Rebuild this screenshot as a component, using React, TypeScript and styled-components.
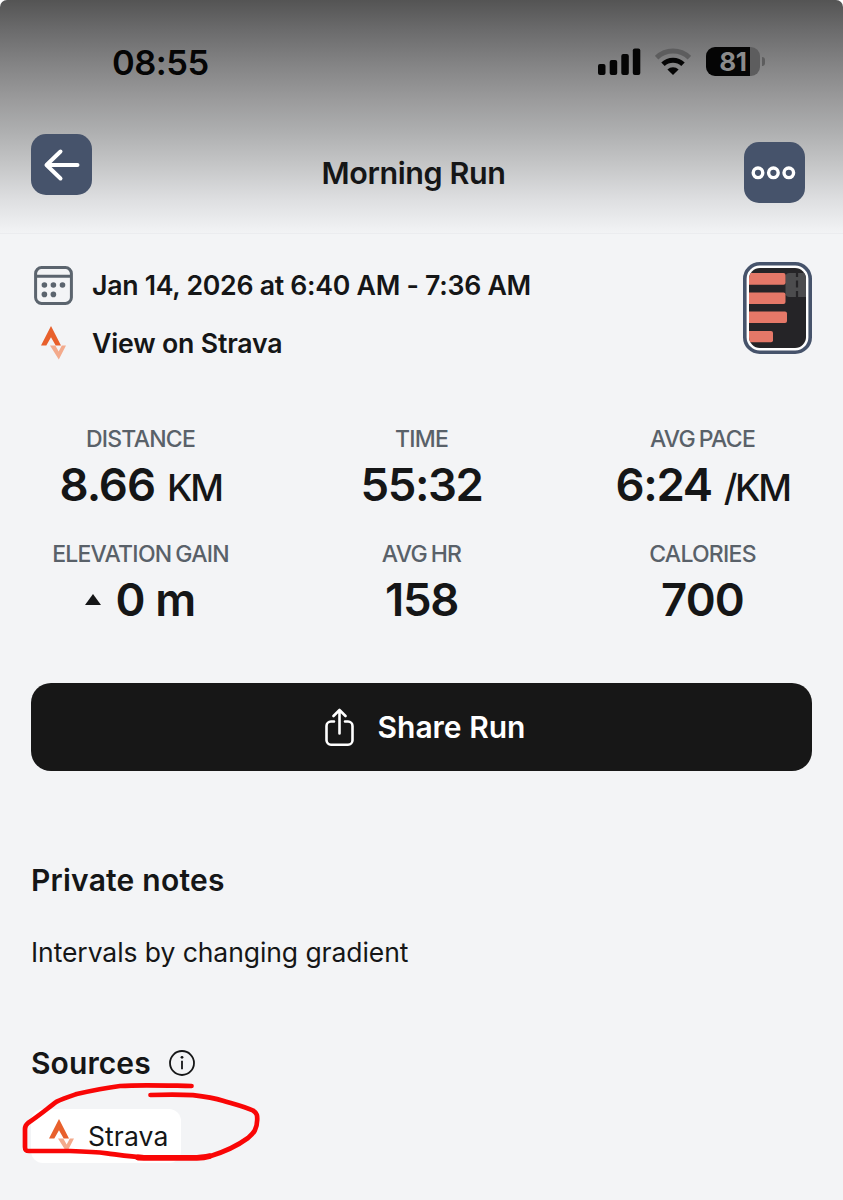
import React from "react";
import styled, { createGlobalStyle } from "styled-components";

const GlobalStyle = createGlobalStyle`
  *, *::before, *::after { box-sizing: border-box; }
  html, body { margin: 0; background: #fff; }
  body { font-family: Inter, "Liberation Sans", sans-serif; color: #151617; }
  h1, h2, p { margin: 0; }
  svg { display: block; flex: none; }
`;

const Screen = styled.div`
  position: relative;
  width: 843px;
  height: 1200px;
  overflow: hidden;
  display: flex;
  flex-direction: column;
  background: #f3f4f6;
  border-radius: 7px 7px 0 0;
`;

const Text = styled.span<{ $size: number; $weight?: number; $spacing?: number }>`
  font-size: ${(p) => p.$size}px;
  font-weight: ${(p) => p.$weight ?? 600};
  letter-spacing: ${(p) => p.$spacing ?? 0}px;
  line-height: 40px;
  white-space: pre;
`;

const Header = styled.header`
  height: 234px;
  flex: none;
  border-bottom: 1px solid #ebecef;
  background: linear-gradient(
    #545454 0, #6b6b6c 30px, #848485 65px, #9b9b9c 100px, #adaeaf 130px,
    #c5c6c7 165px, #dedfe1 200px, #f2f3f5 233px
  );
`;

const StatusBar = styled.div`
  height: 126px;
  padding: 43px 78px 0 112px;
  display: flex;
  align-items: flex-start;
  justify-content: space-between;
  color: #050505;
`;

const StatusIcons = styled.div`
  display: flex;
  gap: 14px;
  padding-top: 4px;
`;

const Battery = styled.div`
  display: flex;
  align-items: center;
  gap: 2px;
  margin-left: 1px;
`;

const BatteryBody = styled.div`
  width: 54px;
  height: 29px;
  border-radius: 9px;
  background: linear-gradient(90deg, #050505 44px, #5d5d5e 44px);
  color: #8b8b8c;
  display: flex;
  justify-content: center;
  font-size: 26px;
  line-height: 30px;
  font-weight: 700;
  letter-spacing: -0.3px;
`;

const BatteryTip = styled.div`
  width: 3px;
  height: 9px;
  border-radius: 0 4px 4px 0;
  background: #5d5d5e;
`;

const NavBar = styled.nav`
  display: flex;
  justify-content: space-between;
  padding: 8px 38px 0 31px;
`;

const IconButton = styled.button<{ $offset: number }>`
  width: 61px;
  height: 61px;
  margin: ${(p) => p.$offset}px 0 0;
  padding: 0;
  border: 0;
  border-radius: 15px;
  background: #46536b;
  display: grid;
  place-items: center;
`;

const Title = styled(Text).attrs({ as: "h1" })`
  margin: 19px 9px 0 0;
`;

const Summary = styled.section`
  height: 185px;
  padding: 28px 31px 0 34px;
  display: flex;
  justify-content: space-between;
`;

const Facts = styled.div`
  display: flex;
  flex-direction: column;
  gap: 18px;
  padding-top: 3px;
`;

const Fact = styled.div`
  height: 40px;
  display: flex;
  align-items: center;
  gap: 19px;
`;

const IconSlot = styled.span`
  width: 39px;
  height: 40px;
  display: grid;
  place-items: center;
`;

const Stats = styled.section`
  height: 264px;
  display: grid;
  grid-template-columns: repeat(3, 281px);
  grid-template-rows: 115px 115px;
`;

const Stat = styled.div`
  display: flex;
  flex-direction: column;
  align-items: center;
`;

const Label = styled(Text)`
  color: #596169;
  word-spacing: -1.5px;
`;

const Value = styled.div`
  height: 40px;
  margin-top: 6px;
  display: flex;
  align-items: baseline;
`;

const Unit = styled(Text)`
  margin-left: 12px;
`;

const Triangle = styled.i`
  width: 0;
  height: 0;
  margin-right: 14px;
  border: solid transparent;
  border-width: 0 8.5px 11px;
  border-bottom-color: #151617;
  transform: translateY(-11px);
`;

const ShareButton = styled.button`
  width: 781px;
  height: 88px;
  margin: 0 31px;
  padding: 0 0 0 7px;
  border: 0;
  border-radius: 20px;
  background: #171717;
  color: #fff;
  font-family: inherit;
  display: flex;
  align-items: center;
  justify-content: center;
  gap: 24px;
`;

const Notes = styled.section`
  height: 272px;
  padding: 89px 31px 0;
  display: flex;
  flex-direction: column;
  gap: 32px;
`;

const Sources = styled.section`
  padding: 0 31px;
`;

const SourcesHeading = styled.div`
  display: flex;
  align-items: center;
  gap: 18px;
`;

const Chip = styled.div`
  width: 150px;
  height: 54px;
  margin-top: 26px;
  padding-left: 18px;
  border-radius: 12px;
  background: #fff;
  display: flex;
  align-items: center;
  gap: 14px;
`;

const Scribble = styled.svg`
  position: absolute;
  left: 10px;
  top: 1070px;
`;

const StravaMark = () => (
  <svg width="25" height="34" viewBox="0 0 25 34">
    <path fill="#f3aa8c" d="M9 19.5h5.3l3.4 6 3.1-6H25l-7.2 14z" />
    <path fill="#e8602c" d="M10 0l10 19.5h-5.3L10 11.3l-4.7 8.2H0z" />
  </svg>
);

const CalendarIcon = () => (
  <svg width="39" height="39" viewBox="0 0 39 39" fill="none" stroke="#5b646e" strokeWidth="3">
    <rect x="1.6" y="1.6" width="35.8" height="35.8" rx="6" />
    <path d="M2 10.2h35" />
    <g fill="#5b646e" stroke="none">
      <circle cx="10.4" cy="19" r="2.8" />
      <circle cx="19.4" cy="19" r="2.8" />
      <circle cx="28.5" cy="19" r="2.8" />
      <circle cx="10.4" cy="28.4" r="2.8" />
      <circle cx="19.4" cy="28.4" r="2.8" />
    </g>
  </svg>
);

const WorkoutThumb = () => (
  <svg width="69" height="92" viewBox="0 0 69 92">
    <defs>
      <clipPath id="thumb">
        <rect x="6" y="6" width="57" height="80" rx="11" />
      </clipPath>
    </defs>
    <rect x="1.8" y="1.8" width="65.4" height="88.4" rx="15" fill="#fff" stroke="#46536b" strokeWidth="3.6" />
    <g clipPath="url(#thumb)">
      <path fill="#252427" d="M0 0h69v92H0z" />
      <rect x="42.5" y="11" width="32" height="24" rx="4" fill="#4c4c4e" />
      <path d="M54 11v4M54 18.5v7M54 29v6" stroke="#252427" strokeWidth="2.2" />
      <g fill="#e57868">
        <rect x="2" y="11" width="40.5" height="11.7" rx="2" />
        <rect x="2" y="30.5" width="40.5" height="11.5" rx="2" />
        <rect x="2" y="49.5" width="42" height="11.5" rx="2" />
        <rect x="2" y="69" width="28" height="11.3" rx="2" />
      </g>
    </g>
  </svg>
);

const stats = [
  { label: "DISTANCE", value: "8.66", unit: "KM", spacing: -1 },
  { label: "TIME", value: "55:32", spacing: -1.4 },
  { label: "AVG PACE", value: "6:24", unit: "/KM", spacing: -1.3 },
  { label: "ELEVATION GAIN", value: "0 m", climb: true, spacing: -0.8 },
  { label: "AVG HR", value: "158", spacing: -1.3 },
  { label: "CALORIES", value: "700", spacing: -0.8 },
];

export default function App() {
  return (
    <Screen>
      <GlobalStyle />
      <Header>
        <StatusBar>
          <Text $size={34.5} $spacing={-0.5}>08:55</Text>
          <StatusIcons>
            <svg width="43" height="29" viewBox="0 0 43 29" fill="#050505">
              <rect x="0" y="17" width="7.5" height="11" rx="2" />
              <rect x="11.7" y="13" width="7.5" height="15" rx="2" />
              <rect x="23.3" y="7" width="7.5" height="21" rx="2" />
              <rect x="34.8" y="1.5" width="7.5" height="26.5" rx="2" />
            </svg>
            <svg width="36" height="29" viewBox="0 0 36 29" fill="none" strokeWidth="5">
              <path d="M1.6 10.7a23.5 23.5 0 0 1 32.8 0" stroke="#5d5d5e" />
              <path d="M8 17.3a14.5 14.5 0 0 1 20 0" stroke="#050505" />
              <path d="M18 28l-5.6-5.4a8 8 0 0 1 11.2 0z" fill="#050505" />
            </svg>
            <Battery>
              <BatteryBody>81</BatteryBody>
              <BatteryTip />
            </Battery>
          </StatusIcons>
        </StatusBar>
        <NavBar>
          <IconButton $offset={0} aria-label="Back">
            <svg width="38" height="34" viewBox="0 0 38 34" fill="none" stroke="#fff" strokeWidth="4" strokeLinecap="round" strokeLinejoin="round">
              <path d="M34.5 17H4M17.5 3.5L3.5 17l14 13.5" />
            </svg>
          </IconButton>
          <Title $size={30.5} $spacing={-0.4}>Morning Run</Title>
          <IconButton $offset={8} aria-label="More">
            <svg width="46" height="16" viewBox="0 0 46 16" fill="none" stroke="#fff" strokeWidth="3.4">
              <circle cx="7" cy="7.8" r="4.8" />
              <circle cx="22.4" cy="7.8" r="4.8" />
              <circle cx="37.8" cy="7.8" r="4.8" />
            </svg>
          </IconButton>
        </NavBar>
      </Header>
      <Summary>
        <Facts>
          <Fact>
            <IconSlot><CalendarIcon /></IconSlot>
            <Text $size={26.7} $spacing={-0.28}>Jan 14, 2026 at 6:40 AM - 7:36 AM</Text>
          </Fact>
          <Fact>
            <IconSlot><StravaMark /></IconSlot>
            <Text $size={26.7} $spacing={-0.18}>View on Strava</Text>
          </Fact>
        </Facts>
        <WorkoutThumb />
      </Summary>
      <Stats>
        {stats.map((s) => (
          <Stat key={s.label}>
            <Label $size={23} $weight={500} $spacing={-0.75}>{s.label}</Label>
            <Value>
              {s.climb && <Triangle />}
              <Text $size={45.5} $spacing={s.spacing}>{s.value}</Text>
              {s.unit && <Unit $size={37} $weight={550} $spacing={-2.4}>{s.unit}</Unit>}
            </Value>
          </Stat>
        ))}
      </Stats>
      <ShareButton>
        <svg width="29" height="38" viewBox="0 0 29 38" fill="none" stroke="#fff" strokeWidth="2.6" strokeLinecap="round" strokeLinejoin="round">
          <path d="M9 13.5H6a4.5 4.5 0 0 0-4.5 4.5v14.3A4.5 4.5 0 0 0 6 36.7h17a4.5 4.5 0 0 0 4.5-4.500V18a4.5 4.5 0 0 0-4.5-4.500h-3M14.500 25.500V2M8.500 8l6-6 6 6" />
        </svg>
        <Text $size={30}>Share Run</Text>
      </ShareButton>
      <Notes>
        <Text as="h2" $size={30} $spacing={0.22}>Private notes</Text>
        <Text as="p" $size={26.5} $weight={400} $spacing={-0.07}>Intervals by changing gradient</Text>
      </Notes>
      <Sources>
        <SourcesHeading>
          <Text as="h2" $size={30} $spacing={0.1}>Sources</Text>
          <svg width="26" height="26" viewBox="0 0 26 26" fill="none" stroke="#151617" strokeWidth="1.8">
            <circle cx="13" cy="13" r="12" />
            <path d="M13 10.8v8.4" />
            <circle cx="13" cy="7.3" r="1.4" fill="#151617" stroke="none" />
          </svg>
        </SourcesHeading>
        <Chip>
          <StravaMark />
          <Text $size={26.5} $weight={400} $spacing={0.1}>Strava</Text>
        </Chip>
      </Sources>
      <Scribble width="260" height="100" viewBox="0 0 260 100" fill="none" stroke="#f90606" strokeWidth="4.7" strokeLinecap="round" strokeLinejoin="round">
        <path d="M181.5 16C155 15.5 130 14.5 110 16C95 18 80 21 66.7 24C58 27 52 29 46.700 31.700C38 38 30 45 18 53C15.500 55 15 57 15 59V77C15 80 16 81 19 81H60C75 81.500 86 82 97 83.300C110 85 122 87 134 87.300H187C192 87.200 196 87 200 86" />
        <path d="M140.500 25C155 24.500 170 24.300 183 25.200C194 26.500 204 28 213 30.700C224 34 236 37 243 40.500C247.500 43.500 247.300 46 247.200 50C247 59 244 63 238 68C227 76 214 82 200 86.200" />
        <path strokeWidth="5.800" d="M128 87.500L134 87.800H187C192 87.700 196 87.200 199 86.300" />
      </Scribble>
    </Screen>
  );
}
